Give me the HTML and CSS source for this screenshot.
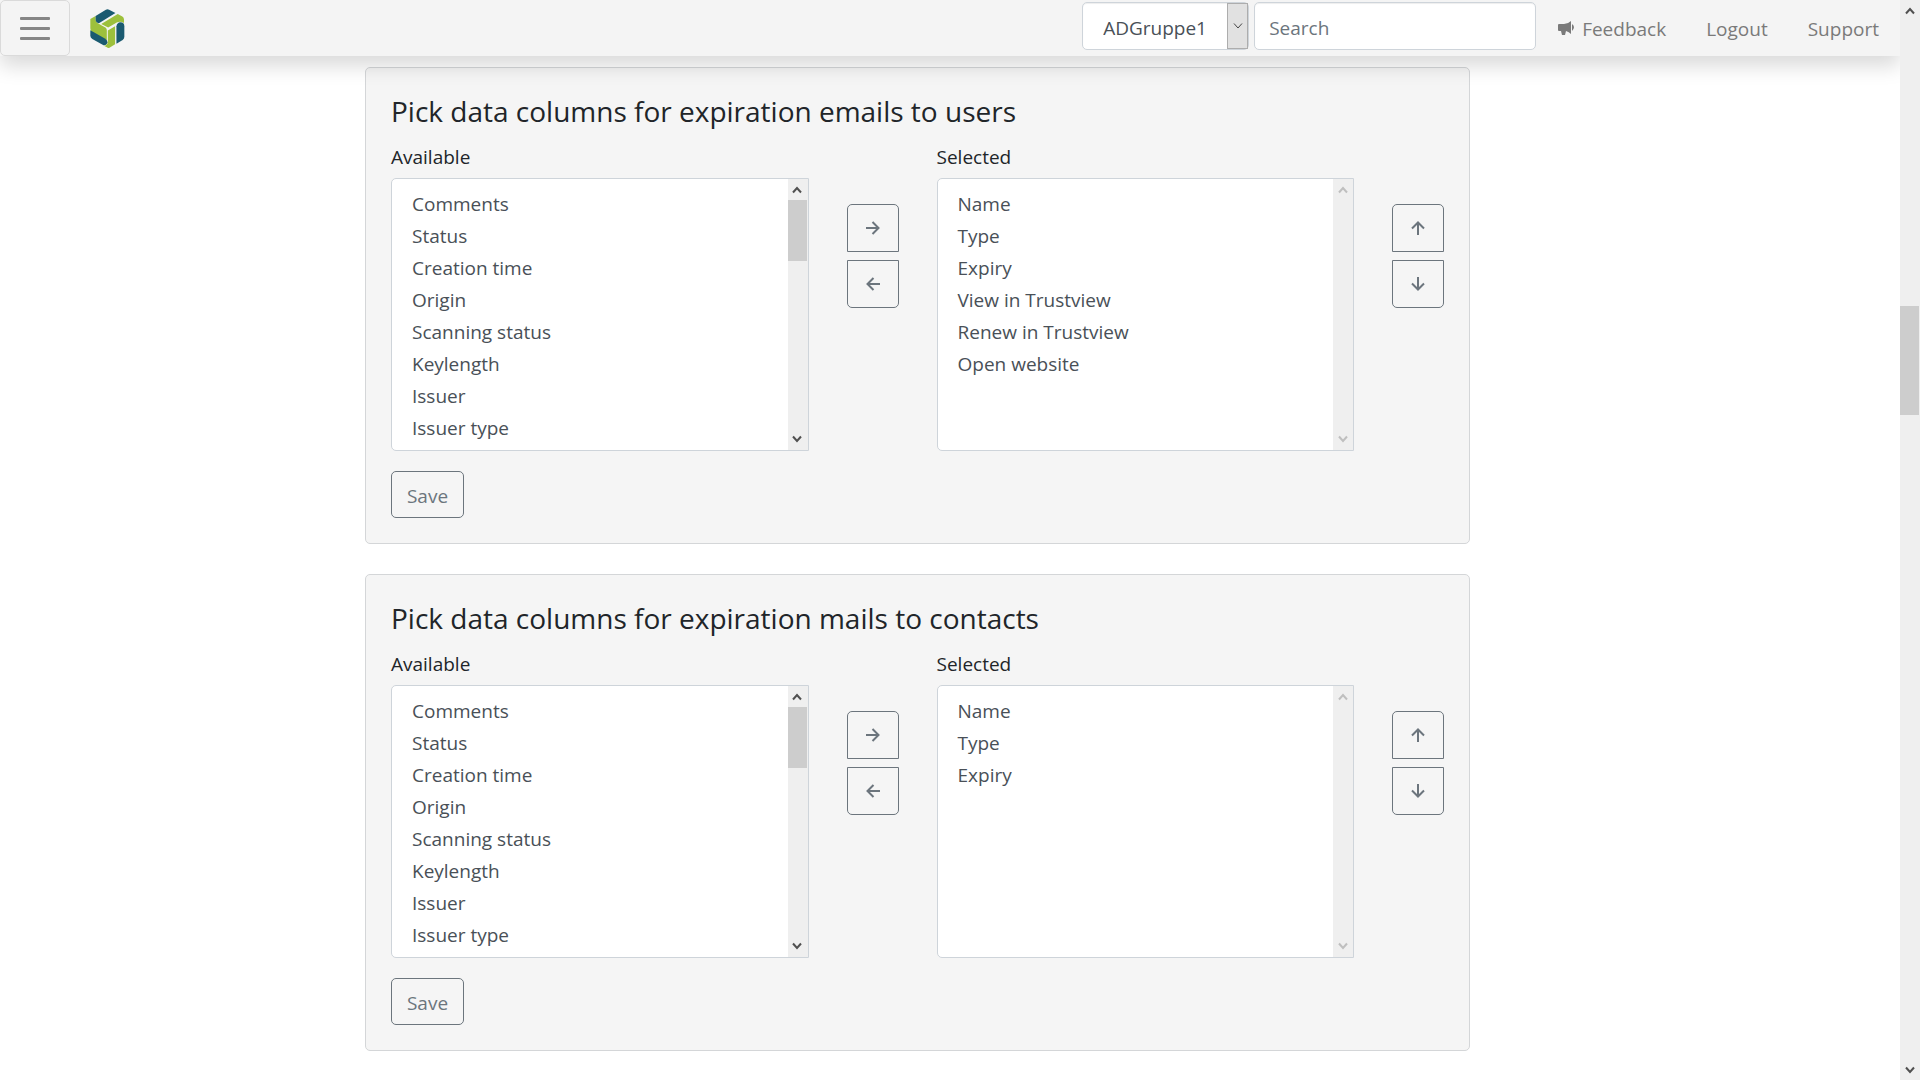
FILE: index.html
```html
<!DOCTYPE html>
<html lang="en">
<head>
<meta charset="utf-8">
<title>Settings</title>
<link rel="stylesheet" href="styles.css">
</head>
<body>
<svg class="sprite" aria-hidden="true">
  <symbol id="chev-up" viewBox="0 0 10 8"><path d="M1 6.500L5 2L9 6.500"/></symbol>
  <symbol id="chev-down" viewBox="0 0 10 8"><path d="M1 1.500L5 6L9 1.500"/></symbol>
  <symbol id="arrow-right" viewBox="0 0 16 16"><path d="M1 8H13.500M7.500 2L13.500 8L7.500 14"/></symbol>
  <symbol id="arrow-left" viewBox="0 0 16 16"><path d="M15 8H2.500M8.500 2L2.500 8L8.500 14"/></symbol>
  <symbol id="arrow-up" viewBox="0 0 16 16"><path d="M8 15V2.500M2 8.500L8 2.500L14 8.500"/></symbol>
  <symbol id="arrow-down" viewBox="0 0 16 16"><path d="M8 1V13.500M2 7.500L8 13.500L14 7.500"/></symbol>
</svg>
<div class="viewport">
  <header class="navbar">
    <button class="menu" type="button" aria-label="Menu"><span></span><span></span><span></span></button>
    <a class="logo" href="#" aria-label="Home">
      <svg viewBox="270 26 106 118" width="35" height="39">
        <path fill="#9dc03c" d="M271 56L287 47V58Q288 67 299 72L318 83Q321 86 321 91V121L277 96Q271 92 271 84Z"/>
        <path fill="#1a5a70" d="M318 28Q323 25 328 28L347 38L297 69Q287 67 287 57V47Z"/>
        <path fill="#9dc03c" d="M354 41L368 49Q373 52 373 58V68Q361 61 351 67L325 82L304 71Z"/>
        <path fill="#1a5a70" d="M271 90L315 115Q323 120 323 127Q321 137 311 136L277 117Q271 113 271 107Z"/>
        <path fill="#9dc03c" d="M324 91L346 78V133L329 143Q325 145 321 142L312 137Q324 136 324 124Z"/>
        <path fill="#1a5a70" d="M350 78Q352 67 362 66Q374 66 374 78V110Q374 116 369 120L350 131Z"/>
      </svg>
    </a>
    <form class="tools">
      <div class="group">
        <select aria-label="Group"><option>ADGruppe1</option></select>
        <span class="drop"><svg class="thin" width="10" height="8"><use href="#chev-down"/></svg></span>
      </div>
      <input class="search" type="text" placeholder="Search" aria-label="Search">
    </form>
    <nav class="links">
      <a href="#"><svg class="horn" viewBox="0 0 17 15" width="17" height="15"><path d="M1 3H6Q10 3 13 0V13Q11 11 8 10L7 14H4L3 10H1Q0 10 0 9V4Q0 3 1 3ZM14 3Q18 6 14 10Z"/></svg>Feedback</a>
      <a href="#">Logout</a>
      <a href="#">Support</a>
    </nav>
  </header>
  <main class="content">
    <section class="card">
      <h2>Pick data columns for expiration emails to users</h2>
      <div class="picker">
        <div class="field">
          <label for="users-available">Available</label>
          <div class="list">
            <select id="users-available" multiple size="8">
              <option>Comments</option><option>Status</option><option>Creation time</option><option>Origin</option><option>Scanning status</option><option>Keylength</option><option>Issuer</option><option>Issuer type</option>
            </select>
            <div class="bar"><svg width="10" height="8"><use href="#chev-up"/></svg><i></i><svg width="10" height="8"><use href="#chev-down"/></svg></div>
          </div>
        </div>
        <div class="moves">
          <button type="button" aria-label="Add"><svg width="16" height="16"><use href="#arrow-right"/></svg></button>
          <button type="button" aria-label="Remove"><svg width="16" height="16"><use href="#arrow-left"/></svg></button>
        </div>
        <div class="field">
          <label for="users-selected">Selected</label>
          <div class="list">
            <select id="users-selected" multiple size="8">
              <option>Name</option><option>Type</option><option>Expiry</option><option>View in Trustview</option><option>Renew in Trustview</option><option>Open website</option>
            </select>
            <div class="bar idle"><svg width="10" height="8"><use href="#chev-up"/></svg><svg width="10" height="8"><use href="#chev-down"/></svg></div>
          </div>
        </div>
        <div class="moves">
          <button type="button" aria-label="Move up"><svg width="16" height="16"><use href="#arrow-up"/></svg></button>
          <button type="button" aria-label="Move down"><svg width="16" height="16"><use href="#arrow-down"/></svg></button>
        </div>
      </div>
      <button class="save" type="button">Save</button>
    </section>
    <section class="card">
      <h2>Pick data columns for expiration mails to contacts</h2>
      <div class="picker">
        <div class="field">
          <label for="contacts-available">Available</label>
          <div class="list">
            <select id="contacts-available" multiple size="8">
              <option>Comments</option><option>Status</option><option>Creation time</option><option>Origin</option><option>Scanning status</option><option>Keylength</option><option>Issuer</option><option>Issuer type</option>
            </select>
            <div class="bar"><svg width="10" height="8"><use href="#chev-up"/></svg><i></i><svg width="10" height="8"><use href="#chev-down"/></svg></div>
          </div>
        </div>
        <div class="moves">
          <button type="button" aria-label="Add"><svg width="16" height="16"><use href="#arrow-right"/></svg></button>
          <button type="button" aria-label="Remove"><svg width="16" height="16"><use href="#arrow-left"/></svg></button>
        </div>
        <div class="field">
          <label for="contacts-selected">Selected</label>
          <div class="list">
            <select id="contacts-selected" multiple size="8">
              <option>Name</option><option>Type</option><option>Expiry</option>
            </select>
            <div class="bar idle"><svg width="10" height="8"><use href="#chev-up"/></svg><svg width="10" height="8"><use href="#chev-down"/></svg></div>
          </div>
        </div>
        <div class="moves">
          <button type="button" aria-label="Move up"><svg width="16" height="16"><use href="#arrow-up"/></svg></button>
          <button type="button" aria-label="Move down"><svg width="16" height="16"><use href="#arrow-down"/></svg></button>
        </div>
      </div>
      <button class="save" type="button">Save</button>
    </section>
  </main>
</div>
<div class="bar page-bar"><svg width="10" height="8"><use href="#chev-up"/></svg><i></i><svg width="10" height="8"><use href="#chev-down"/></svg></div>
</body>
</html>
```
FILE: styles.css
```css
* { box-sizing: border-box; }
body {
  margin: 0;
  display: grid;
  grid-template-columns: 1fr 20px;
  height: 100vh;
  font: 19px/30px "Open Sans", "Noto Sans", sans-serif;
  color: #212529;
  background: #fff;
}
button, input, select { font: inherit; margin: 0; }
.sprite { display: none; }
.viewport { overflow-y: auto; scrollbar-width: none; }

.navbar {
  position: sticky;
  top: 0;
  z-index: 1;
  display: flex;
  align-items: flex-start;
  height: 56px;
  background: #f4f4f4;
  box-shadow: 0 10px 20px rgba(0, 0, 0, .15);
}
.menu {
  display: flex;
  flex-direction: column;
  justify-content: center;
  align-items: center;
  gap: 7px;
  width: 70px;
  height: 56px;
  padding: 0;
  border: 1px solid #dadada;
  border-radius: 5px;
  background: none;
}
.menu span { width: 30px; height: 3px; border-radius: 1px; background: #858585; }
.logo { margin: 9px auto 0 20px; line-height: 0; }
.tools { display: flex; gap: 5px; padding-top: 2px; }
.group, .search {
  height: 48px;
  border: 1px solid #ced4da;
  border-radius: 5px;
  background: #fff;
  box-shadow: inset 0 1px 1px rgba(0, 0, 0, .07);
}
.group { display: flex; width: 167px; }
.group select {
  appearance: none;
  flex: 1;
  min-width: 0;
  padding: 4px 0 0 20px;
  border: 0;
  background: none;
  color: #495057;
}
.drop {
  display: grid;
  place-items: center;
  width: 21px;
  border: 1px solid #adadad;
  background: #e1e1e1;
}
.search { width: 282px; padding: 4px 15px 0 14px; color: #495057; }
.search::placeholder { color: #6c757d; opacity: 1; }
.links { display: flex; gap: 40px; padding: 14px 21px 0 22px; }
.links a { color: #7a7a7a; text-decoration: none; }
.horn { fill: #7a7a7a; margin-right: 7px; }

svg { fill: none; }
.bar svg { stroke: #505050; stroke-width: 2; }
.bar.idle svg { stroke: #bfbfbf; }
.thin { stroke: #444; stroke-width: 1; }

.content {
  display: grid;
  grid-template-columns: 73fr 221fr 86fr;
  row-gap: 30px;
  padding: 11px 0 29px;
}
.card {
  grid-column: 2;
  padding: 25px;
  border: 1px solid #d4d6d8;
  border-radius: 5px;
  background: #f5f5f5;
}
h2 { margin: 0 0 13px; font-size: 28px; font-weight: 400; line-height: 36px; }
.picker { display: grid; grid-template-columns: 1fr 52px 1fr 52px; gap: 38px; }
.field label { display: block; margin-bottom: 6px; }
.list {
  display: flex;
  height: 273px;
  border: 1px solid #ced4da;
  border-radius: 5px 0 0 5px;
  background: #fff;
  overflow: hidden;
}
.list select {
  flex: 1;
  min-width: 0;
  padding: 11px 18px 0;
  border: 0;
  outline: 0;
  background: none;
  color: #495057;
  scrollbar-width: none;
}
.list option { min-height: 32px; padding: 1px 2px; line-height: 30px; }
.bar {
  display: flex;
  flex-direction: column;
  align-items: center;
  justify-content: space-between;
  width: 20px;
  padding: 7px 1px 7px 0;
  background: #efefef;
}
.bar i { width: 100%; height: 61px; margin: 6px 0 auto; background: #cdcdcd; }
.page-bar {
  display: grid;
  grid-template-columns: 1fr;
  grid-template-rows: 21px 285fr 109fr 644fr 21px;
  justify-items: center;
  align-items: center;
  padding: 0 1px 0 0;
}
.page-bar i { grid-row: 3; height: 100%; margin: 0; }
.page-bar svg:last-child { grid-row: 5; }
.moves { display: flex; flex-direction: column; gap: 8px; padding-top: 62px; }
.moves button {
  display: grid;
  place-items: center;
  height: 48px;
  padding: 0;
  border: 1px solid #6c757d;
  border-radius: 5px 5px 0 0;
  background: none;
}
.moves button:last-child { border-radius: 0 0 5px 5px; }
.moves svg { stroke: #6c757d; stroke-width: 2; }
.save {
  display: block;
  width: 73px;
  height: 47px;
  margin-top: 20px;
  padding: 2px 0 0;
  border: 1px solid #6c757d;
  border-radius: 5px;
  background: none;
  color: #6c757d;
}
```
